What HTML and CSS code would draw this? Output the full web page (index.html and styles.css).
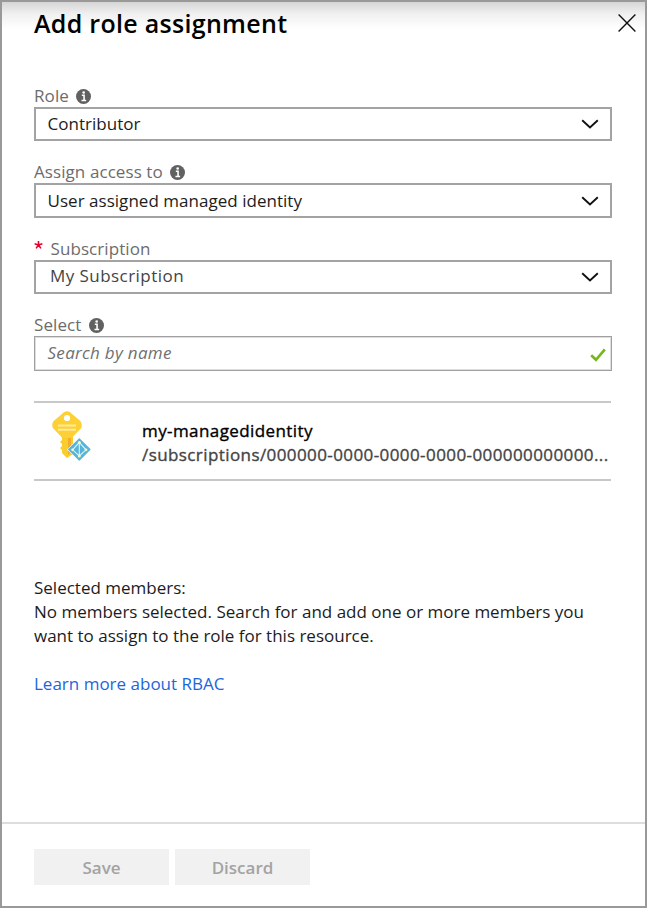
FILE: index.html
```html
<!DOCTYPE html>
<html lang="en">
<head>
<meta charset="utf-8">
<title>Add role assignment</title>
<link rel="stylesheet" href="styles.css">
</head>
<body>
<svg class="defs" aria-hidden="true">
  <symbol id="info" viewBox="0 0 16 16"><circle cx="8" cy="8" r="8" fill="#616161"/><path d="M6.2 6.6H8.6v5.2M5.8 12.2h5" fill="none" stroke="#fff" stroke-width="1.7"/><circle cx="8.2" cy="3.7" r="1.4" fill="#fff"/></symbol>
  <symbol id="chevron" viewBox="0 0 18 10"><path d="M1.2 1.2 9 8.4l7.8-7.2" fill="none" stroke="#111" stroke-width="1.9"/></symbol>
</svg>
<main class="panel">
  <header class="header">
    <h1 class="title">Add role assignment</h1>
    <svg class="close" viewBox="0 0 18 18"><path d="M.6.6l16.8 16.8M17.4.6.6 17.4" stroke="#111" stroke-width="1.4"/></svg>
  </header>
  <section class="form">
    <div class="field">
      <div class="label"><span>Role</span><svg class="info"><use href="#info"/></svg></div>
      <div class="box"><span>Contributor</span><svg class="chevron"><use href="#chevron"/></svg></div>
    </div>
    <div class="field">
      <div class="label"><span>Assign access to</span><svg class="info"><use href="#info"/></svg></div>
      <div class="box tall"><span>User assigned managed identity</span><svg class="chevron"><use href="#chevron"/></svg></div>
    </div>
    <div class="field">
      <div class="label"><svg class="required" viewBox="0 0 10 10"><path d="M5 5V.5M5 5 .7 3.6M5 5l4.3-1.4M5 5 2.3 8.8M5 5l2.7 3.8" stroke="#e3002b" stroke-width="1.7"/></svg><span>Subscription</span></div>
      <div class="box subscription"><span>My Subscription</span><svg class="chevron"><use href="#chevron"/></svg></div>
    </div>
    <div class="field">
      <div class="label"><span>Select</span><svg class="info"><use href="#info"/></svg></div>
      <div class="box tall search"><span>Search by name</span><svg class="check" viewBox="0 0 16 14"><path d="M1.2 7.2 6 11.8 14.8 1.4" fill="none" stroke="#76b71b" stroke-width="2.6"/></svg></div>
    </div>
  </section>
  <section class="result">
    <svg class="key" viewBox="0 0 40 50">
      <path d="M9 24h12v19l-6 4-5-5v-3l-2-2 2-2v-2l-2-2 2-2v-2z" fill="#f9cd2e"/>
      <path d="M16 27h3v14l-3 3z" fill="#f4ae28"/>
      <path d="M12 1.3q3-2 6 0L28.4 10q2 2.7 1 7L20 26.5H10L.8 17q-1.5-4 .8-7z" fill="#fdd136"/>
      <circle cx="15" cy="7" r="3.1" fill="#fff"/>
      <path d="M6 14.6h18M6 18.8h18" stroke="#ffeb9c" stroke-width="2"/>
      <path d="M27.3 26.2 39.6 38.4 27.3 50.2 15 38.4z" fill="#fff"/>
      <path d="M27.3 28 38 38.4 27.3 49 16.6 38.4z" fill="#55b4da" stroke="#55b4da" stroke-width="1.2" stroke-linejoin="round"/>
      <path d="M27.3 31.3 34 38.8 27.3 45 20.6 38.8zM27.3 31v14" fill="none" stroke="#dff1f8" stroke-width="1.1"/>
      <g fill="#f4f6bc"><circle cx="27.3" cy="31.5" r="1.5"/><circle cx="20.6" cy="38.8" r="1.4"/><circle cx="34" cy="38.8" r="1.4"/><circle cx="27.3" cy="45" r="1.5"/></g>
    </svg>
    <div class="identity">
      <div class="name">my-managedidentity</div>
      <div class="path">/subscriptions/000000-0000-0000-0000-000000000000...</div>
    </div>
  </section>
  <section class="members">
    <div>Selected members:</div>
    <div>No members selected. Search for and add one or more members you</div>
    <div>want to assign to the role for this resource.</div>
    <a class="link">Learn more about RBAC</a>
  </section>
  <footer class="footer">
    <div class="button">Save</div>
    <div class="button">Discard</div>
  </footer>
</main>
</body>
</html>
```
FILE: styles.css
```css
* { box-sizing: border-box; }
body { margin: 0; }
.defs { display: none; }
.panel {
  width: 647px; height: 908px; border: 2px solid #999;
  display: flex; flex-direction: column; color: #1c1c1c; white-space: nowrap;
  background: linear-gradient(#d6d6d6, #f0f0f0 12px, #fff 27px);
  font: 400 17px/24px "Open Sans", "Noto Sans", sans-serif;
}
.header { height: 81px; padding: 3px 9px 0 32px; display: flex; justify-content: space-between; align-items: flex-start; }
.title { margin: 0; font-size: 25px; line-height: 36px; font-weight: 600; letter-spacing: .3px; color: #000; }
.close { width: 18px; height: 18px; margin-top: 9px; }
.form { padding: 0 33px 0 32px; display: flex; flex-direction: column; gap: 18px; }
.label { height: 24px; padding-top: 1px; display: flex; align-items: center; gap: 7.5px; color: #6c6c6c; letter-spacing: .08px; }
.info { width: 15px; height: 15px; margin-top: 2px; }
.required { width: 9px; height: 10px; margin-top: -7px; }
.box {
  height: 34px; padding: 0 11px 0 11.5px; border: 2px solid #a3a3a3; background: #fff;
  display: flex; align-items: center; justify-content: space-between; letter-spacing: .03px;
}
.tall { height: 35px; }
.chevron { width: 18px; height: 10px; }
.subscription { padding-left: 14px; color: #444; letter-spacing: .45px; }
.subscription span { margin-top: -3px; }
.search { padding: 0 5px 0 12.5px; color: #707070; font-style: italic; letter-spacing: .3px; border-width: 1px; border-color: #a0a0a0; box-shadow: inset 0 0 0 1px #ddd; }
.search span { margin-top: -1px; }
.check { width: 16px; height: 14px; margin-top: 2px; }
.result {
  height: 80px; margin: 30px 34px 0 32px; border: solid #c8c8c8; border-width: 2px 0;
  display: flex; align-items: flex-start;
}
.key { width: 40px; height: 50px; margin: 8px 50px 0 18px; flex: none; }
.identity { padding-top: 16px; letter-spacing: .41px; -webkit-text-stroke: .35px currentColor; }
.name { color: #000; }
.path { color: #444; }
.members { margin: 95px 32px 0; }
.link { display: block; margin-top: 24px; color: #1b66dc; }
.footer { margin-top: auto; height: 84px; padding: 25px 32px 0; border-top: 2px solid #ddd; display: flex; gap: 6px; background: #fff; }
.button { width: 135px; height: 36px; padding-top: 1px; background: #f1f1f1; color: #a3a3a3; font-weight: 600; display: flex; align-items: center; justify-content: center; }
```
